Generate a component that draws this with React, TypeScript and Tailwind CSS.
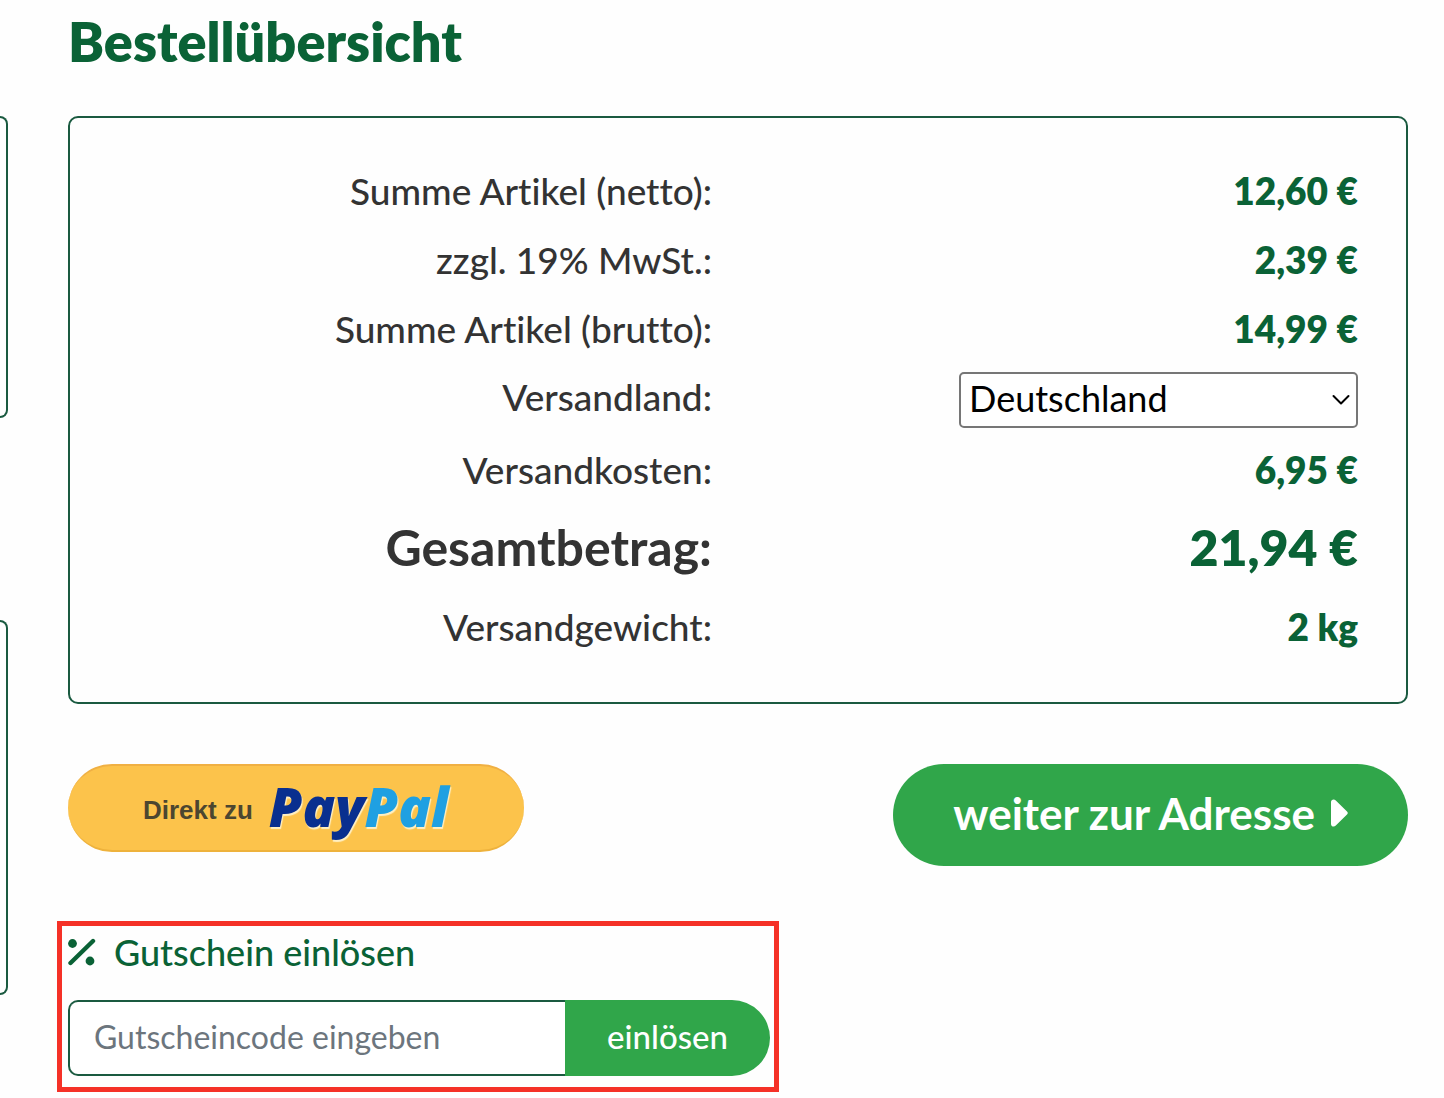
import { useState } from "react";

const summary = [
  { label: "Summe Artikel (netto):", value: "12,60 €" },
  { label: "zzgl. 19% MwSt.:", value: "2,39 €" },
  { label: "Summe Artikel (brutto):", value: "14,99 €" },
  { label: "Versandland:", type: "country" },
  { label: "Versandkosten:", value: "6,95 €" },
  { label: "Gesamtbetrag:", value: "21,94 €", type: "total" },
  { label: "Versandgewicht:", value: "2 kg" },
];

const countries = ["Deutschland", "Österreich", "Schweiz"];

const CountrySelect = ({ value, onChange }: any) => {
  return (
    <div className="relative ml-auto w-[399px] max-w-full">
      <select
        id="country"
        value={value}
        onChange={(e) => onChange(e.target.value)}
        className="block h-14 w-full appearance-none rounded-[5px] border-2 border-[#767676] bg-white pb-1 pl-2 pr-10 text-[36px] leading-[48px] text-black"
      >
        {countries.map((country) => (
          <option key={country}>{country}</option>
        ))}
      </select>
      <svg
        className="pointer-events-none absolute right-2 top-[22px] h-3 w-[18px]"
        viewBox="0 0 18 12"
        fill="none"
        stroke="#000"
        strokeWidth="2"
        strokeLinecap="round"
        strokeLinejoin="round"
      >
        <path d="M1.5 2 L9 9.5 L16.5 2" />
      </svg>
    </div>
  );
};

const OrderSummary = () => {
  const [country, setCountry] = useState("Deutschland");

  return (
    <div className="rounded-[10px] border-2 border-[#1a5a40] px-12 pb-[41px] pt-[38px]">
      <table className="w-full table-fixed text-[37px] leading-[44px]">
        <tbody>
          {summary.map((row) => {
            if (row.type === "country") {
              return (
                <tr key={row.label} className="h-[72px]">
                  <th
                    scope="row"
                    className="pb-1 pr-[26px] text-right font-medium"
                  >
                    <label htmlFor="country">{row.label}</label>
                  </th>
                  <td className="pt-0.5">
                    <CountrySelect value={country} onChange={setCountry} />
                  </td>
                </tr>
              );
            }
            if (row.type === "total") {
              return (
                <tr key={row.label} className="h-[88px] text-[50px] leading-[60px]">
                  <th scope="row" className="pb-0.5 pr-[26px] text-right font-bold">
                    {row.label}
                  </th>
                  <td className="pb-0.5 text-right font-extrabold text-[#0a6236]">
                    {row.value}
                  </td>
                </tr>
              );
            }
            return (
              <tr key={row.label} className="h-[69px]">
                <th scope="row" className="pr-[26px] text-right font-medium">
                  {row.label}
                </th>
                <td className="text-right font-extrabold text-[#0a6236]">
                  {row.value}
                </td>
              </tr>
            );
          })}
        </tbody>
      </table>
    </div>
  );
};

const PayPalButton = () => {
  return (
    <button
      type="button"
      className="flex h-[88px] w-[34%] items-center justify-center gap-4 whitespace-nowrap rounded-full border-y-2 border-b-[#eeb23c] border-t-[#f0b043] bg-[#fcc34b]"
    >
      <span className="pt-1 font-['Liberation_Sans',sans-serif] text-[26px] font-bold leading-8 text-[#4c4630]">
        Direkt zu
      </span>
      <span className="pb-1 font-['Open_Sans',sans-serif] text-[54px] font-extrabold italic leading-[60px] text-[#092f8f] [text-shadow:1px_2px_1px_#fff0c4]">
        Pay<span className="text-[#1fa0e2]">Pal</span>
      </span>
    </button>
  );
};

const Voucher = () => {
  const [code, setCode] = useState("");

  return (
    <form
      className="-ml-[11px] w-[722px] max-w-full border-[5px] border-[#f53127] pb-[11px] pl-[6px] pr-1"
      onSubmit={(e) => e.preventDefault()}
    >
      <label
        htmlFor="voucher"
        className="mb-[22px] flex h-[52px] items-center gap-[18px] text-[36px] font-medium leading-[44px] text-[#0a6236]"
      >
        <svg className="h-7 w-7" viewBox="0 0 28 28" fill="currentColor">
          <circle cx="4.5" cy="5.5" r="4.4" />
          <circle cx="22" cy="23" r="4.4" />
          <path
            d="M2.5 25 L25 3"
            stroke="currentColor"
            strokeWidth="4.4"
            strokeLinecap="round"
          />
        </svg>
        Gutschein einlösen
      </label>
      <div className="flex">
        <input
          id="voucher"
          type="text"
          value={code}
          onChange={(e) => setCode(e.target.value)}
          placeholder="Gutscheincode eingeben"
          className="h-[76px] min-w-0 flex-1 rounded-l-[10px] border-2 border-r-0 border-[#1a5a40] bg-white px-6 pb-1 text-[32px] leading-[44px] placeholder:text-[#6c757d]"
        />
        <button
          type="submit"
          className="h-[76px] rounded-r-full bg-[#30a64a] px-[42px] pb-1 text-[33px] font-medium leading-[44px] text-white"
        >
          einlösen
        </button>
      </div>
    </form>
  );
};

const App = () => {
  return (
    <div className="flex bg-[#fefefe] font-['Lato',sans-serif] text-[#333] [font-variant-ligatures:none]">
      <aside className="w-2 shrink-0 pt-[116px]">
        <div className="h-[302px] rounded-r-[10px] border-2 border-l-0 border-[#1a5a40]" />
        <div className="mt-[202px] h-[375px] rounded-r-[10px] border-2 border-l-0 border-[#1a5a40]" />
      </aside>
      <main className="min-w-0 flex-1 pb-[6px] pl-[60px] pr-9 pt-3">
        <h1 className="mb-11 text-[54px] font-extrabold leading-[60px] text-[#0a6236]">
          Bestellübersicht
        </h1>
        <OrderSummary />
        <div className="mb-[55px] mt-[60px] flex items-start justify-between">
          <PayPalButton />
          <button
            type="button"
            className="flex h-[102px] items-center gap-4 rounded-full bg-[#30a64a] px-[60px] pb-1 text-[44px] font-bold leading-[52px] text-white"
          >
            weiter zur Adresse
            <svg className="h-7 w-[17px]" viewBox="0 0 17 28" fill="currentColor">
              <path d="M0 3 C0 .4 3 -.4 4.8 1.4 L16 12.6 C17 13.6 17 14.4 16 15.4 L4.8 26.6 C3 28.4 0 27.6 0 25 Z" />
            </svg>
          </button>
        </div>
        <Voucher />
      </main>
    </div>
  );
};

export default App;
